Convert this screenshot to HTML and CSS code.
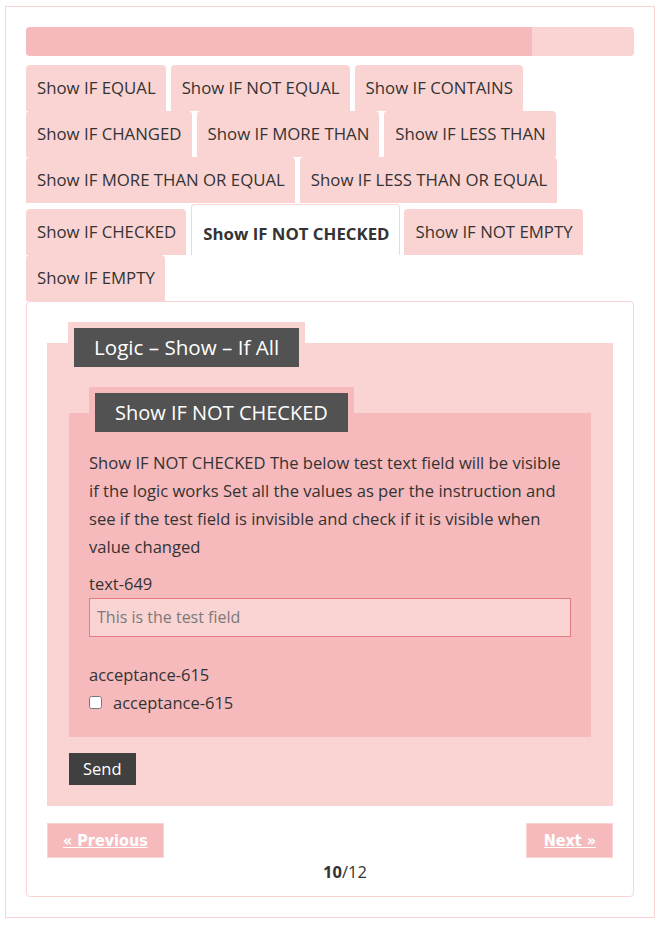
FILE: index.html
```html
<!DOCTYPE html>
<html>
<head>
<meta charset="utf-8">
<link rel="stylesheet" href="styles.css">
</head>
<body>
<div class="page">
  <div class="progress"><div class="progress-fill" style="width: 83.2%"></div></div>
  <div class="tabs">
    <div class="tab">Show IF EQUAL</div>
    <div class="tab">Show IF NOT EQUAL</div>
    <div class="tab">Show IF CONTAINS</div>
    <div class="tab">Show IF CHANGED</div>
    <div class="tab">Show IF MORE THAN</div>
    <div class="tab">Show IF LESS THAN</div>
    <div class="tab">Show IF MORE THAN OR EQUAL</div>
    <div class="tab">Show IF LESS THAN OR EQUAL</div>
    <div class="tab">Show IF CHECKED</div>
    <div class="tab active">Show IF NOT CHECKED</div>
    <div class="tab">Show IF NOT EMPTY</div>
    <div class="tab">Show IF EMPTY</div>
  </div>
  <div class="panel">
    <div class="fs outer">
      <div class="legend"><span class="legend-text">Logic – Show – If All</span></div>
      <div class="fs inner">
        <div class="legend"><span class="legend-text">Show IF NOT CHECKED</span></div>
        <p class="desc">Show IF NOT CHECKED The below test text field will be visible if the logic works Set all the values as per the instruction and see if the test field is invisible and check if it is visible when value changed</p>
        <div class="label">text-649</div>
        <div class="input">This is the test field</div>
        <div class="label label-acc">acceptance-615</div>
        <label class="check"><input type="checkbox"><span>acceptance-615</span></label>
      </div>
      <div class="send-row"><span class="send">Send</span></div>
    </div>
    <div class="pager">
      <span class="pbtn"><span class="plink">« Previous</span></span>
      <span class="pbtn pbtn-next"><span class="plink">Next »</span></span>
    </div>
    <div class="count"><b>10</b>/12</div>
  </div>
</div>
</body>
</html>
```

FILE: styles.css
```css
* { box-sizing: border-box; }
body {
  margin: 0;
  font-family: "Open Sans", "Noto Sans", sans-serif;
  color: #333;
  background: #fff;
}
.page {
  margin: 6px 5px 0 5px;
  width: 650px;
  height: 912px;
  border: 1px solid #fad4d2;
  padding: 20px 20px 0 20px;
}
.progress {
  height: 29px;
  background: #fad4d2;
  border-radius: 4px;
  overflow: hidden;
  margin-bottom: 9px;
}
.progress-fill {
  height: 100%;
  background: #f6babd;
}
.tabs {
  display: flex;
  flex-wrap: wrap;
  align-items: flex-end;
}
.tab {
  height: 46px;
  line-height: 46px;
  padding: 0 10px 0 11px;
  margin-right: 5px;
  background: #fad4d2;
  border-radius: 4px 4px 0 0;
  font-size: 16.8px;
  color: #333;
  white-space: nowrap;
}
.tab.active {
  height: 51px;
  line-height: 58px;
  margin-top: 1px;
  background: #fff;
  border: 1px solid #fad4d2;
  border-bottom: none;
  font-weight: bold;
  margin-right: 4px;
}
.panel {
  border: 1px solid #fad4d2;
  border-radius: 4px;
  padding: 20px 20px 10px 20px;
}
.fs {
  display: flex;
  flex-direction: column;
  align-items: flex-start;
}
.outer {
  margin-top: 21px;
  background: #fad4d2;
  padding: 0 22px 20px 22px;
}
.outer > .legend {
  margin-top: -21px;
  margin-left: -1px;
}
.outer > .legend .legend-text {
  font-size: 20.6px;
}
.legend {
  padding: 6px;
  background: #fad4d2;
}
.legend-text {
  display: block;
  height: 39px;
  line-height: 39px;
  padding: 0 20px;
  background: #525252;
  color: #fff;
  font-size: 20px;
}
.inner {
  align-self: stretch;
  margin-top: 40px;
  background: #f6babd;
  padding: 0 20px 21px 20px;
}
.inner > .legend {
  margin-top: -26px;
  background: #f6babd;
}
.desc {
  margin: 11px 0 9px 0;
  font-size: 16.6px;
  line-height: 28px;
  color: #333;
}
.label {
  font-size: 16.5px;
  line-height: 28px;
}
.input {
  align-self: stretch;
  height: 39px;
  border: 1px solid #e07c82;
  background: #fad4d2;
  padding: 0 7px;
  line-height: 37px;
  font-size: 16px;
  color: #7a7a7a;
}
.label-acc {
  margin-top: 24px;
}
.check {
  display: flex;
  align-items: center;
  height: 27px;
  font-size: 16.5px;
}
.check input {
  width: 13px;
  height: 13px;
  margin: 0 11px 0 0;
}
.send-row {
  margin-top: 15px;
  margin-left: -1px;
}
.send {
  display: block;
  height: 34px;
  line-height: 32px;
  padding: 0 14px;
  background: #404040;
  border: 1px solid #fad4d2;
  color: #fff;
  font-size: 16.5px;
}
.pager {
  display: flex;
  justify-content: space-between;
  margin-top: 17px;
}
.pbtn {
  display: block;
  height: 35px;
  line-height: 33px;
  padding: 0 15px;
  background: #f6babd;
  border: 1px solid #fad4d2;
}
.pbtn-next {
  padding: 0 16px 0 17px;
}
.plink {
  color: #fff;
  font-family: "DejaVu Sans Condensed", "DejaVu Sans", sans-serif;
  font-weight: bold;
  font-size: 16px;
  text-decoration: underline;
}
.count {
  text-align: center;
  font-size: 16.5px;
  line-height: 28px;
  margin-top: 0;
  padding-left: 30px;
}
```
